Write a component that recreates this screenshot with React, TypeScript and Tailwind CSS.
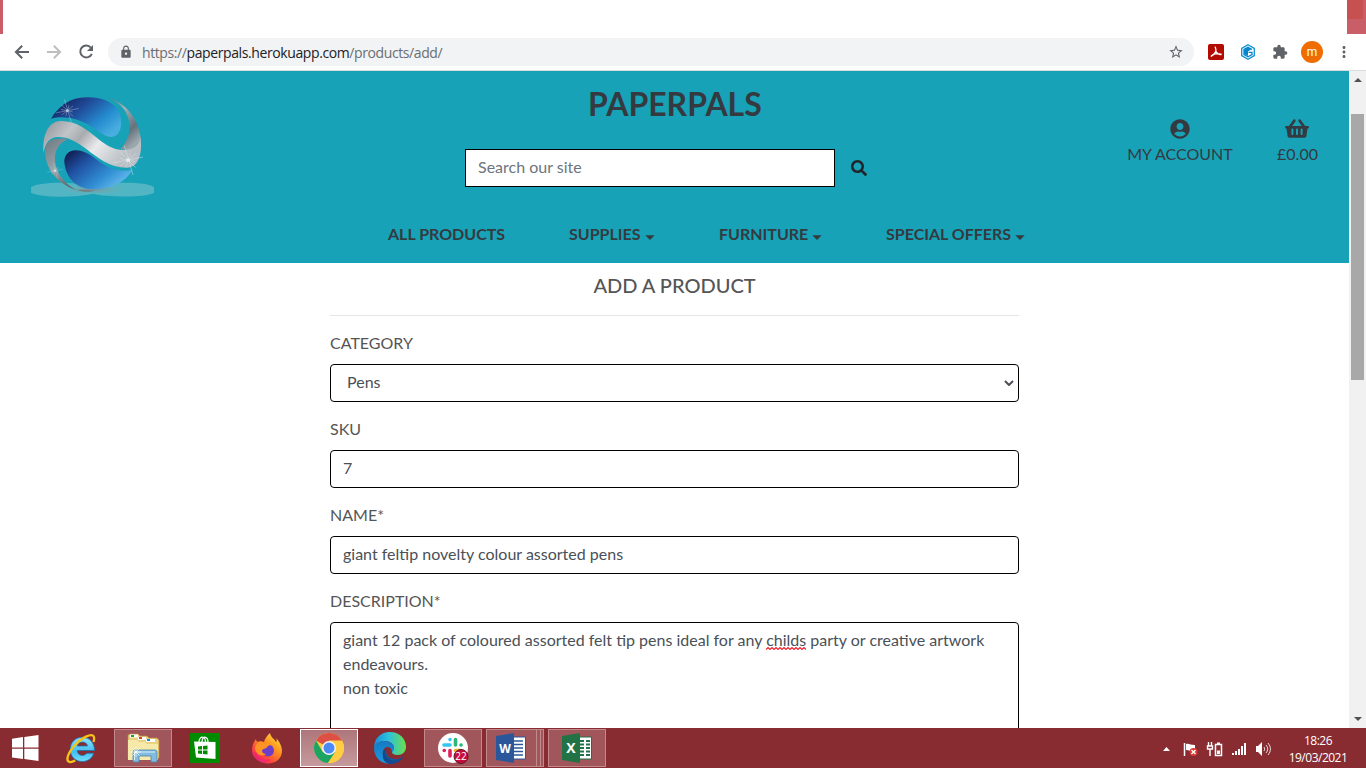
import type { ReactNode } from "react";
import { FaSearch, FaShoppingBasket, FaUserCircle } from "react-icons/fa";
import { MdExtension, MdLock, MdMoreVert, MdStarBorder } from "react-icons/md";

function TabStrip() {
  return (
    <div className="flex h-[34px] shrink-0 justify-between bg-white">
      <div className="w-[3px] bg-[#c95e69]" />
      <div className="w-[19px] bg-[#c95e69]">
        <div className="h-[19px] w-4 bg-[#c75050]" />
      </div>
    </div>
  );
}

function AcrobatIcon() {
  return (
    <svg viewBox="0 0 16 16" className="size-4">
      <rect width="16" height="16" rx="2" fill="#b30b00" />
      <path d="M7.300 3.200C8.800 6.800 8 9 3.300 12.200M8 7.500c1.200 2.200 2.800 3.200 5 3M5 10.600c2.500-1 5.500-1.300 8-.4" fill="none" stroke="#fff" strokeWidth="1.400" strokeLinecap="round" />
    </svg>
  );
}

function HexIcon() {
  return (
    <svg viewBox="0 0 16 16" className="size-4">
      <path d="M8 .8 14.300 4.400v7.200L8 15.200 1.700 11.600V4.400z" fill="#fff" stroke="#0a8fd4" strokeWidth="1.300" />
      <path d="M12 5.500 8 3.300 4 5.500v5l4 2.300 4-2.300V8.300H8.500" fill="none" stroke="#0785ca" strokeWidth="1.300" />
      <path d="M4 5.500 8 3.300l3.300 2L8 7.500V12L4 10z" fill="#0785ca" />
    </svg>
  );
}

function Arrow({ className }: { className: string }) {
  return (
    <svg viewBox="0 0 20 20" className={className}>
      <path d="M17 10H4.500M10.200 3.700 3.900 10l6.300 6.300" fill="none" stroke="currentColor" strokeWidth="2" />
    </svg>
  );
}

function Reload() {
  return (
    <svg viewBox="0 0 20 20" className="ml-3 size-5">
      <path d="M14.900 5.600A6 6 0 1 0 15.800 11.800" fill="none" stroke="currentColor" strokeWidth="2" />
      <path d="M17 3v6h-6z" fill="currentColor" />
    </svg>
  );
}

function Toolbar() {
  return (
    <div className="flex h-[37px] shrink-0 items-center border-b border-[#d9dcdc] bg-white text-[#5f6368]">
      <Arrow className="ml-3 size-5" />
      <Arrow className="ml-3 size-5 rotate-180 text-[#bdbfc1]" />
      <Reload />
      <div className="ml-3 flex h-7 w-[1086px] items-center rounded-full bg-[#f1f3f4] pl-[11px]">
        <MdLock className="size-[14px]" />
        <span className="ml-[9px] font-['Open_Sans',sans-serif] text-[14px] tracking-[-0.4px] text-[#6a6e72]">
          https://<span className="text-[#202124]">paperpals.herokuapp.com</span>/products/add/
        </span>
        <MdStarBorder className="mr-[10px] ml-auto size-4" />
      </div>
      <div className="ml-[14px] flex items-center">
        <AcrobatIcon />
        <span className="w-4" />
        <HexIcon />
        <span className="w-4" />
        <MdExtension className="size-4" />
        <span className="ml-[13px] flex size-[22px] items-center justify-center rounded-full bg-[#ef6c00] font-['Roboto',sans-serif] text-[12px] text-white">m</span>
        <MdMoreVert className="ml-3 size-[18px]" />
      </div>
    </div>
  );
}

function Sparkle({ x, y, s }: { x: number; y: number; s: number }) {
  return (
    <g transform={`translate(${x} ${y}) scale(${s})`} stroke="#e9f4fa" strokeWidth="1.400" opacity=".7">
      <path d="M-36 7 36-7M-9-35 12 36M-18-18 18 18M-18 14 18-15M-20-4 17 4M5-17-5 17" />
      <circle r="4.500" fill="#fff" stroke="none" />
    </g>
  );
}

function Logo() {
  return (
    <svg viewBox="0 0 450 390" className="mt-[9px] ml-5 h-[130px] w-[150px]">
      <defs>
        <linearGradient id="blueTop" x1="0" y1="0" x2="1" y2=".7">
          <stop offset=".05" stopColor="#101b4d" />
          <stop offset=".4" stopColor="#1f4795" />
          <stop offset=".75" stopColor="#258cd0" />
          <stop offset="1" stopColor="#48aee0" />
        </linearGradient>
        <linearGradient id="blueBottom" x1="0" y1="0" x2="1" y2=".7">
          <stop offset=".05" stopColor="#101b4d" />
          <stop offset=".35" stopColor="#2052a3" />
          <stop offset=".7" stopColor="#308dd2" />
          <stop offset="1" stopColor="#68bdf0" />
        </linearGradient>
        <linearGradient id="ribbon" x1="0" y1="0" x2="1" y2=".4">
          <stop offset="0" stopColor="#8c9299" />
          <stop offset=".3" stopColor="#c2c5c8" />
          <stop offset=".45" stopColor="#a8acb0" />
          <stop offset=".65" stopColor="#e9eaec" />
          <stop offset="1" stopColor="#b8bec3" />
        </linearGradient>
        <linearGradient id="edgeRight" x1="0" y1="0" x2=".6" y2="1">
          <stop offset="0" stopColor="#5e6b74" />
          <stop offset=".35" stopColor="#a5b2b9" />
          <stop offset=".75" stopColor="#63727b" />
          <stop offset="1" stopColor="#9ca7ad" />
        </linearGradient>
        <linearGradient id="edgeLeft" x1="0" y1="0" x2=".5" y2="1">
          <stop offset="0" stopColor="#6e7a82" />
          <stop offset=".6" stopColor="#99a4aa" />
          <stop offset="1" stopColor="#626d72" />
        </linearGradient>
        <radialGradient id="shade">
          <stop offset="0" stopColor="#818e92" />
          <stop offset="1" stopColor="#62b9c5" stopOpacity="0" />
        </radialGradient>
      </defs>
      <path d="M33 322C55 305 160 303 217 320 280 303 380 305 402 321V339C370 354 260 351 217 341 170 353 65 354 33 338Z" fill="#51b5c3" />
      <ellipse cx="217" cy="328" rx="105" ry="17" fill="url(#shade)" />
      <path d="M93 116C114 82 142 60 176 54 223 46 276 58 295 92 310 121 305 160 284 169 262 178 238 155 211 137 174 115 132 105 93 116Z" fill="url(#blueTop)" />
      <path d="M134 254C129 229 144 211 168 211 206 212 224 239 257 257 282 270 306 275 337 270 317 305 275 327 224 328 180 329 142 304 134 254Z" fill="url(#blueBottom)" />
      <path d="M262 54C315 66 355 112 363 178 363 210 337 215 302 207 324 184 335 151 325 115 316 84 294 65 262 54Z" fill="url(#edgeRight)" />
      <path d="M75 218C72 187 93 171 142 177 108 195 99 226 108 258 116 289 137 313 171 331 114 311 80 274 75 218Z" fill="url(#edgeLeft)" />
      <path d="M71 218C66 170 83 124 122 123 168 122 203 150 235 177 262 199 286 212 315 210 342 208 357 197 361 174 368 212 359 260 324 263 272 265 231 232 199 207 169 184 142 170 113 171 89 172 75 189 71 218Z" fill="url(#ribbon)" />
      <path d="M171 331C189 327 205 333 225 331 209 338 187 336 171 331Z" fill="#707d82" />
      <Sparkle x={142} y={92} s={0.95} />
      <Sparkle x={324} y={240} s={1.25} />
      <Sparkle x={105} y={272} s={0.65} />
    </svg>
  );
}

function NavItem({ children, menu, className }: { children: ReactNode; menu?: boolean; className: string }) {
  return (
    <div className={`flex items-center whitespace-nowrap ${className}`}>
      {children}
      {menu && <svg viewBox="0 0 10 5" className="mt-[7px] ml-1 h-[5px] w-[10px]"><path d="M.3.2h9.400L5 4.900z" fill="#343a40" /></svg>}
    </div>
  );
}

function SiteHeader() {
  return (
    <header className="flex h-[192px] shrink-0 bg-[#17a2b8] text-[#343a40]">
      <div className="w-[388px]"><Logo /></div>
      <div className="flex w-[640px] flex-col">
        <h1 className="mt-[13px] ml-[200px] text-[32px] leading-[40px] font-bold">PAPERPALS</h1>
        <div className="mt-[25px] ml-[77px] flex items-center">
          <div className="h-[38px] w-[370px] border border-black bg-white px-3 pt-[5px] leading-6 text-[#6c757d]">Search our site</div>
          <FaSearch className="ml-4 size-4 text-[#212529]" />
        </div>
        <nav className="mt-[35px] flex h-6 font-bold">
          <NavItem className="w-[181px]">ALL PRODUCTS</NavItem>
          <NavItem menu className="w-[150px]">SUPPLIES</NavItem>
          <NavItem menu className="w-[167px]">FURNITURE</NavItem>
          <NavItem menu className="w-[142px]">SPECIAL OFFERS</NavItem>
        </nav>
      </div>
      <div className="mt-[47px] ml-[92px] flex w-[120px] flex-col items-center">
        <FaUserCircle className="mt-px size-5" />
        <span className="mt-[3px] leading-6 whitespace-nowrap">MY ACCOUNT</span>
      </div>
      <div className="mt-[47px] ml-[27px] flex w-[60px] flex-col items-center">
        <FaShoppingBasket className="h-[21px] w-6" />
        <span className="mt-[3px] ml-px leading-6">£0.00</span>
      </div>
    </header>
  );
}

function Field({ label, children }: { label: string; children: ReactNode }) {
  return (
    <div className="mb-[15px]">
      <div className="mb-[9px] leading-6">{label}</div>
      {children}
    </div>
  );
}

const box = "rounded-[4px] border border-black bg-white leading-6 text-[#495057]";

function ProductForm() {
  return (
    <main className="ml-[330px] w-[689px] text-[#555]">
      <h2 className="mt-[10px] text-center text-[20px] leading-6 font-medium">ADD A PRODUCT</h2>
      <div className="mt-[18px] mb-[15px] h-px bg-[#e5e5e5]" />
      <Field label="CATEGORY">
        <div className={`flex h-[38px] items-center justify-between pr-1 pb-[2px] pl-4 ${box}`}>
          <span>Pens</span>
          <svg viewBox="0 0 10 6" className="mt-[2px] h-[6px] w-[10px]"><path d="m1 1 4 4 4-4" fill="none" stroke="#495057" strokeWidth="2" /></svg>
        </div>
      </Field>
      <Field label="SKU"><div className={`h-[38px] px-3 pt-[5px] ${box}`}>7</div></Field>
      <Field label="NAME*"><div className={`h-[38px] px-3 pt-[5px] ${box}`}>giant feltip novelty colour assorted pens</div></Field>
      <Field label="DESCRIPTION*">
        <div className={`h-[260px] px-3 pt-[5px] ${box}`}>
          giant 12 pack of coloured assorted felt tip pens ideal for any{" "}
          <span className="relative">
            childs
            <svg viewBox="0 0 40 3" className="absolute -bottom-px left-0 h-[3px] w-10"><path d="m0 2.500 2-2 2 2 2-2 2 2 2-2 2 2 2-2 2 2 2-2 2 2 2-2 2 2 2-2 2 2 2-2 2 2 2-2 2 2 2-2 2 2" fill="none" stroke="#f0202a" strokeWidth="1.100" /></svg>
          </span>{" "}
          party or creative artwork
          <br />endeavours.<br />non toxic
        </div>
      </Field>
    </main>
  );
}

function Scrollbar() {
  return (
    <div className="flex w-[17px] shrink-0 flex-col items-center bg-[#f1f1f1]">
      <svg viewBox="0 0 8 4" className="mt-[7px] h-1 w-2"><path d="M0 4 4 0l4 4z" fill="#505050" /></svg>
      <div className="mt-8 h-[266px] w-[13px] bg-[#a8a8a8]" />
      <svg viewBox="0 0 8 4" className="mt-auto mb-[7px] h-1 w-2"><path d="m0 0 4 4 4-4z" fill="#505050" /></svg>
    </div>
  );
}

function StartIcon() {
  return <svg viewBox="0 0 27 26" className="h-[26px] w-[27px]"><path d="M0 3.700 11 2.100v10.300H0zM12.300 1.900 26.500 0v12.400H12.300zM0 13.700h11V24L0 22.400zM12.300 13.700h14.200V26l-14.200-1.900z" fill="#fff" /></svg>;
}

function ExplorerEIcon() {
  return (
    <svg viewBox="0 0 32 32" className="size-8">
      <defs><linearGradient id="ie" x1="0" y1="0" x2="0" y2="1"><stop stopColor="#8de3fc" /><stop offset=".6" stopColor="#43bdf1" /><stop offset="1" stopColor="#75ddfa" /></linearGradient></defs>
      <path d="M29.500 18.500H12.200c.2 3 2.200 4.900 5 4.900 2.100 0 3.500-.8 4.400-2.200h7.200c-1.700 5.300-6.200 8.300-11.700 8.300C10.300 29.500 5.200 24.500 5.200 17.500 5.200 10.500 10.400 5.300 17.300 5.300c7.500 0 12.200 5.400 12.200 13.200zM12.300 14h10.200c-.5-2.500-2.400-3.900-5.100-3.900-2.600 0-4.500 1.400-5.100 3.900z" fill="url(#ie)" stroke="#1674ae" strokeWidth=".8" />
      <path d="M28.500 10c2-6.500-.7-8.600-7.500-5.400C12.500 8.600 3.500 19.200 2.500 26c-.7 4.700 3.200 5 7.700 2.500" fill="none" stroke="#f6c316" strokeWidth="2.300" />
    </svg>
  );
}

function FolderIcon() {
  return (
    <svg viewBox="0 0 34 32" className="h-8 w-[34px]">
      <path d="M2 27V3l2-1h8l2 2h7l2 2h8l2 2v18z" fill="#ecd27f" stroke="#b78e3d" strokeWidth=".7" />
      <path d="M4 2.500h8v3H4zM12 5h8v3h-8zM20 7h9v3h-9z" fill="#fff" />
      <path d="M5 3h3v2H5z" fill="#16a637" /><path d="M13 5h3v2h-3z" fill="#d84627" /><path d="M21 7h3v2h-3z" fill="#168bd5" />
      <path d="M2 8h9l2 2h6l2 2h11v16H2z" fill="#f6e9a9" />
      <path d="M7 30V20q0-2 2-2h20q2 0 2 2v10h-6v-6H13v6z" fill="#82bce1" stroke="#4c83ac" strokeWidth=".8" />
      <path d="M8.500 28V20H29" fill="none" stroke="#d5f0fb" />
      <path d="M10 15v10M5 20h10M6.500 16.500l7 7m0-7-7 7" stroke="#fff" strokeWidth=".7" />
    </svg>
  );
}

function StoreIcon() {
  return (
    <svg viewBox="0 0 30 30" className="size-[30px]">
      <path d="M0 0h30v30H0z" fill="#008a00" />
      <path d="m4 8.500 21.500.5V26L6 24.500z" fill="#fff" />
      <path d="M9 9c0-3.500 2-5.500 4.500-4.500 1.500.6 2 2.300 2 4.500M12 9c0-4 2-5.500 4-4.500 1.400.7 2 2.300 2 4.500" fill="none" stroke="#fff" strokeWidth="1.200" />
      <path d="m8 13.600 4-.5v3.400H8zM13 13l4.500-.6v4.100H13zM8 17.500h4V21l-4-.5zM13 17.500h4.500v4L13 21z" fill="#008a00" />
    </svg>
  );
}

function FirefoxIcon() {
  return (
    <svg viewBox="0 0 32 32" className="size-8">
      <defs>
        <linearGradient id="ff" x1="1" y1="0" x2=".2" y2="1"><stop stopColor="#fff44f" /><stop offset=".4" stopColor="#ff9a1f" /><stop offset=".75" stopColor="#ff4a39" /><stop offset="1" stopColor="#e31587" /></linearGradient>
      </defs>
      <path d="M5 7C5 9 6 9 7 10c2-1 4-1 6 0 1-4 3-6 6-9 1 5 4 5 6 9 1-1 1-2 0-4 3 3 6 8 6 13 0 7-6 12.500-14 12.500S1 26 1 18.500C1 14 2.500 10 5 7z" fill="url(#ff)" />
      <circle cx="17" cy="18.500" r="6" fill="#6b3fc7" />
      <path d="M7 10c3-1 5 0 7 2 2-1 4-1 6 1-2 0-3 1-4 2 0 2-5 1-5 4 0 2 2 3 4 3-4 4-12-1-11-7 1-2 2-3 3-5z" fill="#ff9324" />
      <path d="M4 20c2 7 8 10 15 8" fill="none" stroke="#ed2675" strokeWidth="2" opacity=".7" />
    </svg>
  );
}

function ChromeIcon() {
  return (
    <svg viewBox="0 0 30 30" className="size-[30px]">
      <circle cx="15" cy="15" r="15" fill="#ffcd42" />
      <path d="M15 15 2 7.500A15 15 0 0 1 28 7.500H15z" fill="#dd5145" />
      <path d="M2 7.500 8.600 18.700 15 22l6.500-3.300L14 30A15 15 0 0 1 2 7.500z" fill="#1da362" />
      <path d="M15 8h13.200A15 15 0 0 1 14 30l7.500-11.300z" fill="#ffcd42" />
      <circle cx="15" cy="15" r="7" fill="#f3f3f3" /><circle cx="15" cy="15" r="5.500" fill="#4c8bf5" />
    </svg>
  );
}

function EdgeIcon() {
  return (
    <svg viewBox="0 0 32 32" className="size-8">
      <defs>
        <linearGradient id="edgeTop"><stop stopColor="#168bd5" /><stop offset=".45" stopColor="#2dc1df" /><stop offset="1" stopColor="#6be04a" /></linearGradient>
        <linearGradient id="edgeBody" x1="0" y1="0" x2="0" y2="1"><stop stopColor="#167ac4" /><stop offset="1" stopColor="#189adf" /></linearGradient>
      </defs>
      <path d="M0 16C0 6 7 0 16 0c10 0 16 7 16 15 0 5-4 8-8 8-4 0-6-1-6-3 0-1 2-2 2-4 0-4-4-7-9-7-6 0-10 3-11 7z" fill="url(#edgeTop)" />
      <path d="M0 16C1 11 5 9 10 9c6 0 10 3 10 7 0 2-1 3-2 4 0-3-2-5-4-5-4 0-6 4-5 8 1 5 5 8 9 8.500C8 33 0 26 0 16z" fill="url(#edgeBody)" />
      <path d="M12.500 16.500C9 21 12 27 19 28c4 .5 8-1 10.500-4C27 30 21 32 16 32 10 31 8 26 9 21c.5-2 1.500-3.500 3.500-4.500z" fill="#124a91" />
      <path d="M12.500 16.500C11 22 14 26 20 27c4 .5 7-.5 9.500-3-2 3-6 5-10 4.500-7-1-10-6-7-12z" fill="#1459a1" />
    </svg>
  );
}

function SlackIcon() {
  return (
    <svg viewBox="0 0 32 32" className="size-8">
      <circle cx="16" cy="16" r="15" fill="#fff" />
      <g fill="none" strokeLinecap="round" strokeWidth="3.600">
        <path d="M13 7.500v.1M7 13h6" stroke="#36c5f0" /><path d="M18.500 7.500V13M24 13h.1" stroke="#2eb67d" /><path d="M13 18.500V24M7.200 18.500h.1" stroke="#e01e5a" /><path d="M18.500 18.500H24" stroke="#ecb22e" />
      </g>
      <circle cx="24" cy="24.500" r="7" fill="#ca0b40" stroke="#5a1b2a" />
      <text x="24" y="28" textAnchor="middle" fill="#fff" className="font-['Open_Sans',sans-serif] text-[10px]">22</text>
    </svg>
  );
}

function OfficeIcon({ letter, fill }: { letter: string; fill: string }) {
  return (
    <svg viewBox="0 0 31 30" className="h-[30px] w-[31px]">
      <path d="M15 4h14.500v22H15z" fill="#fff" stroke={fill} />
      <path d={letter === "W" ? "M17 8h10M17 11.500h10M17 15h10M17 18.500h10M17 22h10" : "M18 8h4m2 0h4M18 11.500h4m2 0h4M18 15h4m2 0h4M18 18.500h4m2 0h4M18 22h4m2 0h4"} stroke={fill} strokeWidth={letter === "W" ? 1.3 : 2.2} />
      <path d="m0 3 18-3v30L0 27z" fill={fill} />
      <text x="9" y="20" textAnchor="middle" fill="#fff" className={letter === "W" ? "font-['Open_Sans',sans-serif] text-[12px] font-bold" : "font-['Open_Sans',sans-serif] text-[14px] font-bold"}>{letter}</text>
    </svg>
  );
}

const taskButton = "flex h-[38px] w-[58px] items-center justify-center border border-[#c18a8d] bg-[#a0565b]";

function TrayIcons() {
  return (
    <svg viewBox="0 0 110 20" className="h-5 w-[110px]">
      <path d="m1 12 3.500-4L8 12z" fill="#fff" />
      <path d="M22.500 4v13" stroke="#fff" strokeWidth="1.500" /><path d="M24 5c3-1 4 1 9 1v6c-4 1-5-1-9-1z" fill="#fff" />
      <circle cx="31.500" cy="13" r="4" fill="#dc3932" /><path d="m29.500 11 4 4m0-4-4 4" stroke="#fff" strokeWidth="1.400" />
      <path d="M46.500 3v4m3-4v4m-4 0h5v3h-5zm2.500 3v7" stroke="#fff" strokeWidth="1.400" fill="none" />
      <path d="M53.500 5.500h6v11h-6z" stroke="#fff" strokeWidth="1.500" fill="none" /><path d="M55 11.500h3V15h-3zM55 3.500h3v2h-3z" fill="#fff" />
      <path d="M70 14h2v2h-2zM73 12h2v4h-2zM76 10h2v6h-2zM79 7h2v9h-2zM82 4h2v12h-2z" fill="#fff" />
      <path d="M94 7h2l4-4v14l-4-4h-2z" fill="#fff" /><path d="M102 8q1.500 2 0 4m2-6q3.500 4 0 8m2-10q5 6 0 12" stroke="#fff" fill="none" opacity=".8" />
    </svg>
  );
}

function Taskbar() {
  return (
    <footer className="flex h-10 shrink-0 items-center bg-[#882c32]">
      <div className="ml-3 w-[53px]"><StartIcon /></div>
      <div className="w-[49px]"><ExplorerEIcon /></div>
      <div className={taskButton}><FolderIcon /></div>
      <div className="ml-[18px] w-[61px]"><StoreIcon /></div>
      <div className="w-[49px]"><FirefoxIcon /></div>
      <div className="flex h-[38px] w-[58px] items-center justify-center border border-white bg-linear-to-b from-[#ae767a] to-[#c69a9d]"><ChromeIcon /></div>
      <div className="ml-4 w-[50px]"><EdgeIcon /></div>
      <div className={taskButton}><SlackIcon /></div>
      <div className="ml-1 flex h-[38px] w-[51px] items-center justify-center border border-[#c18a8d] bg-[#a0565b]"><OfficeIcon letter="W" fill="#2b579a" /></div>
      <div className="h-[38px] w-1 border-y border-r border-[#c18a8d] bg-[#a0565b]" />
      <div className="mr-1 h-[38px] w-[3px] border-y border-r border-[#c18a8d] bg-[#a0565b]" />
      <div className={taskButton}><OfficeIcon letter="X" fill="#217346" /></div>
      <div className="ml-auto pt-px"><TrayIcons /></div>
      <div className="mr-[17px] ml-[15px] w-[62px] pt-px text-center font-['Open_Sans',sans-serif] text-[12px] leading-[17px] tracking-[-0.5px] whitespace-nowrap text-white">18:26<br />19/03/2021</div>
    </footer>
  );
}

export default function App() {
  return (
    <div className="flex h-[768px] w-[1366px] flex-col overflow-hidden bg-white font-['Lato',sans-serif] text-base">
      <TabStrip />
      <Toolbar />
      <div className="flex h-[657px] shrink-0">
        <div className="flex w-[1349px] flex-col overflow-hidden">
          <SiteHeader />
          <ProductForm />
        </div>
        <Scrollbar />
      </div>
      <Taskbar />
    </div>
  );
}
